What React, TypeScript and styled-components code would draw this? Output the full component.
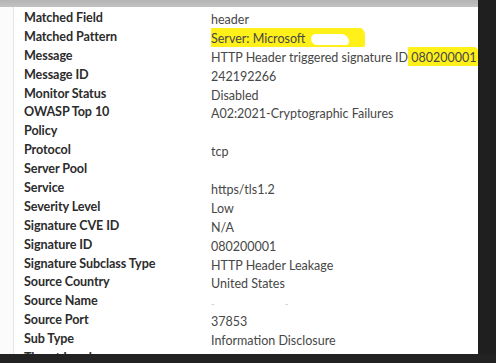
import React from "react";
import styled, { createGlobalStyle } from "styled-components";

const Global = createGlobalStyle`
  html, body { margin: 0; padding: 0; background: #1f1f1f; }
  body { width: 496px; height: 363px; overflow: hidden; font-family: Lato, "Open Sans", sans-serif; }
`;

const Screen = styled.div`
  width: 496px;
  height: 363px;
  display: flex;
  flex-direction: column;
  background: #1f1f1f;
  overflow: hidden;
`;

const TopBar = styled.div`
  height: 7px;
  flex: none;
  width: 478px;
  background: linear-gradient(#b4b4b4, #c2c2c2);
`;

const Body = styled.div`
  display: flex;
  height: 347px;
  flex: none;
`;

const Sheet = styled.div`
  width: 478px;
  flex: none;
  background: #ffffff;
  display: flex;
  overflow: hidden;
`;

const Gutter = styled.div`
  width: 13px;
  flex: none;
  background: #fbfbfb;
  border-right: 1px solid #e6e6e6;
`;

const Table = styled.div`
  flex: 1;
  padding: 2px 0 0 10px;
  display: grid;
  grid-template-columns: 187px 1fr;
  grid-auto-rows: 18.9px;
  min-width: 0;
`;

const Label = styled.div`
  font-size: 12.6px;
  font-weight: 700;
  color: #2c2c2c;
  line-height: 18.9px;
  letter-spacing: -0.1px;
  white-space: nowrap;
`;

const Value = styled.div`
  font-size: 12.5px;
  font-weight: 400;
  color: #474747;
  line-height: 18.9px;
  padding-top: 2px;
  white-space: nowrap;
  overflow: hidden;
`;

const Marker = styled.span<{ $left: number; $right: number }>`
  background: #fff01a;
  margin-left: -${(p) => p.$left}px;
  padding: 4px ${(p) => p.$right}px 4px ${(p) => p.$left}px;
  border-radius: 3px 8px 6px 2px;
`;

const Blot = styled.span<{ $w: number }>`
  display: inline-block;
  width: ${(p) => p.$w}px;
  height: 11px;
  margin-left: 6px;
  background: #ffffff;
  border-radius: 6px 10px 4px 8px;
  vertical-align: middle;
`;

const Faint = styled.span`
  color: #c8c8c8;
  font-size: 10px;
`;

const Spacer = styled.span<{ $w: number }>`
  display: inline-block;
  width: ${(p) => p.$w}px;
`;

const SidePanel = styled.div`
  flex: 1;
  background: #1f1f1f;
`;

const BottomBar = styled.div`
  flex: 1;
  background: #222222;
`;

type Row = { label: string; value: React.ReactNode };

const rows: Row[] = [
  { label: "Matched Field", value: "header" },
  {
    label: "Matched Pattern",
    value: (
      <Marker $left={12} $right={16}>
        Server: Microsoft
        <Blot $w={38} />
      </Marker>
    ),
  },
  {
    label: "Message",
    value: (
      <>
        HTTP Header triggered signature ID{" "}
        <Marker $left={3} $right={2}>080200001</Marker> detected
      </>
    ),
  },
  { label: "Message ID", value: "242192266" },
  { label: "Monitor Status", value: "Disabled" },
  { label: "OWASP Top 10", value: "A02:2021-Cryptographic Failures" },
  { label: "Policy", value: "" },
  { label: "Protocol", value: "tcp" },
  { label: "Server Pool", value: "" },
  { label: "Service", value: "https/tls1.2" },
  { label: "Severity Level", value: "Low" },
  { label: "Signature CVE ID", value: "N/A" },
  { label: "Signature ID", value: "080200001" },
  { label: "Signature Subclass Type", value: "HTTP Header Leakage" },
  { label: "Source Country", value: "United States" },
  {
    label: "Source Name",
    value: (
      <>
        <Faint>-</Faint>
        <Spacer $w={70} />
        <Faint>-</Faint>
      </>
    ),
  },
  { label: "Source Port", value: "37853" },
  { label: "Sub Type", value: "Information Disclosure" },
  { label: "Threat Level", value: "" },
];

export default function App() {
  return (
    <Screen>
      <Global />
      <TopBar />
      <Body>
        <Sheet>
          <Gutter />
          <Table>
            {rows.map((r) => (
              <React.Fragment key={r.label}>
                <Label>{r.label}</Label>
                <Value>{r.value}</Value>
              </React.Fragment>
            ))}
          </Table>
        </Sheet>
        <SidePanel />
      </Body>
      <BottomBar />
    </Screen>
  );
}
